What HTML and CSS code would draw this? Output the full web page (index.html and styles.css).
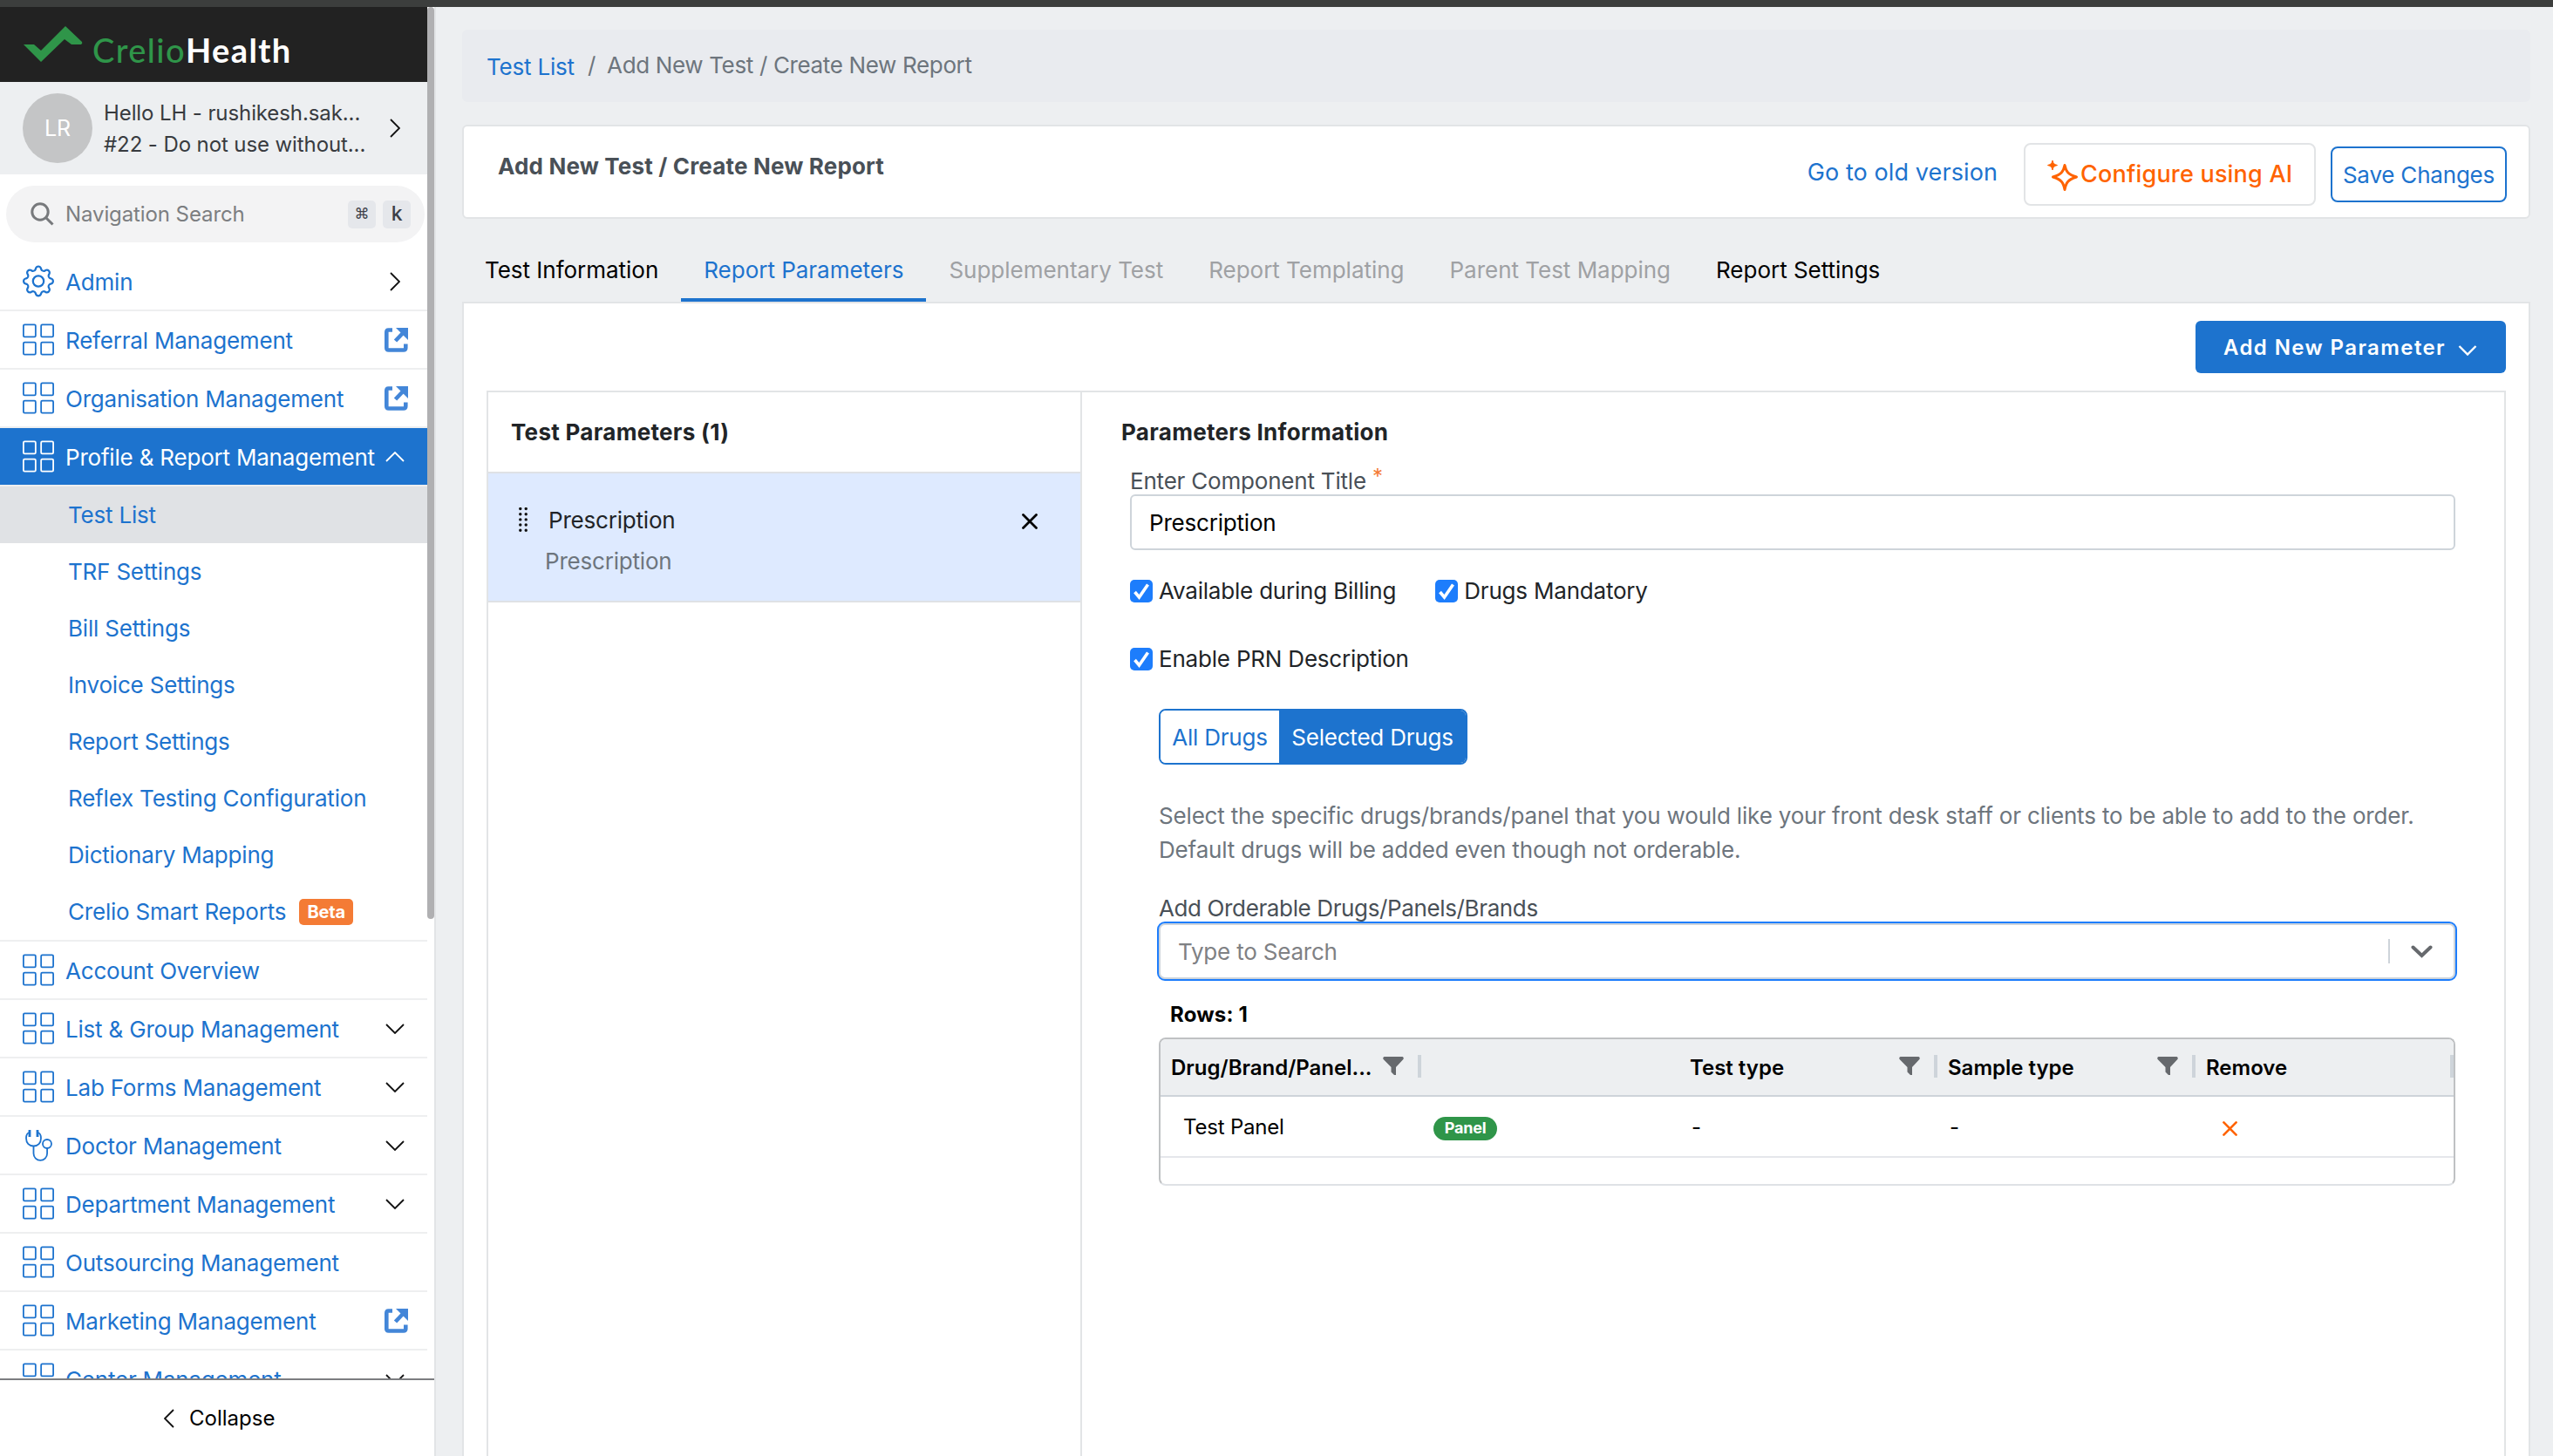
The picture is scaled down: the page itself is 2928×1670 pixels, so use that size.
FILE: index.html
```
<!DOCTYPE html>
<html lang="en">
  <head>
    <meta charset="utf-8" />
    <meta name="viewport" content="width=device-width, initial-scale=1" />
    <title>Add New Test / Create New Report</title>
    <link rel="stylesheet" href="styles.css">
  </head>
  <body>
    <!-- shared icons -->
    <svg class="sprite">
      <symbol id="grid" viewBox="0 0 16 16">
        <g fill="none" stroke="currentColor" stroke-width="0.8">
          <rect x="0.4" y="0.4" width="6.200" height="6.200" rx="0.600" />
          <rect x="9.400" y="0.4" width="6.200" height="6.200" rx="0.600" />
          <rect x="0.4" y="9.400" width="6.200" height="6.200" rx="0.600" />
          <rect x="9.400" y="9.400" width="6.200" height="6.200" rx="0.600" />
        </g>
      </symbol>
      <symbol id="gear" viewBox="0 0 16 16">
        <path fill="currentColor" d="M8 4.754a3.246 3.246 0 1 0 0 6.492 3.246 3.246 0 0 0 0-6.492zM5.754 8a2.246 2.246 0 1 1 4.492 0 2.246 2.246 0 0 1-4.492 0z" />
        <path fill="currentColor" d="M9.796 1.343c-.527-1.790-3.065-1.790-3.592 0l-.094.319a.873.873 0 0 1-1.255.520l-.292-.160c-1.640-.892-3.433.902-2.540 2.541l.159.292a.873.873 0 0 1-.520 1.255l-.319.094c-1.790.527-1.790 3.065 0 3.592l.319.094a.873.873 0 0 1 .520 1.255l-.160.292c-.892 1.640.901 3.434 2.541 2.540l.292-.159a.873.873 0 0 1 1.255.520l.094.319c.527 1.790 3.065 1.790 3.592 0l.094-.319a.873.873 0 0 1 1.255-.520l.292.160c1.640.893 3.434-.902 2.540-2.541l-.159-.292a.873.873 0 0 1 .520-1.255l.319-.094c1.790-.527 1.790-3.065 0-3.592l-.319-.094a.873.873 0 0 1-.520-1.255l.160-.292c.893-1.640-.902-3.433-2.541-2.540l-.292.159a.873.873 0 0 1-1.255-.520l-.094-.319zm-2.633.283c.246-.835 1.428-.835 1.674 0l.094.319a1.873 1.873 0 0 0 2.693 1.115l.291-.160c.764-.415 1.600.420 1.184 1.185l-.159.292a1.873 1.873 0 0 0 1.116 2.692l.318.094c.835.246.835 1.428 0 1.674l-.319.094a1.873 1.873 0 0 0-1.115 2.693l.160.291c.415.764-.420 1.600-1.185 1.184l-.291-.159a1.873 1.873 0 0 0-2.693 1.116l-.094.318c-.246.835-1.428.835-1.674 0l-.094-.319a1.873 1.873 0 0 0-2.692-1.115l-.292.160c-.764.415-1.600-.420-1.184-1.185l.159-.291A1.873 1.873 0 0 0 1.945 8.930l-.319-.094c-.835-.246-.835-1.428 0-1.674l.319-.094A1.873 1.873 0 0 0 3.060 4.377l-.160-.292c-.415-.764.420-1.600 1.185-1.184l.292.159a1.873 1.873 0 0 0 2.692-1.115l.094-.319z" />
      </symbol>
      <symbol id="steth" viewBox="0 0 36 37">
        <g fill="none" stroke="currentColor" stroke-width="1.800">
          <path d="M8 1v8M17 1v8" stroke-width="2.800" />
          <path d="M7.500 4Q4 5 4 10.500C4 16 7.500 19.500 12.500 19.500s8.500-3.500 8.500-9Q21 5 17.500 4" />
          <path d="M12.500 19.500v8.500a7.800 7.800 0 0 0 15.600 0v-6" />
          <circle cx="28" cy="17" r="5" />
        </g>
      </symbol>
      <symbol id="ext" viewBox="0 0 27 28">
        <g fill="none" stroke="currentColor" stroke-width="4.600">
          <path d="M9 2.500H4.500Q2.300 2.500 2.300 5v18q0 2.500 2.500 2.500h17q2.500 0 2.500-2.500v-4.500" />
          <path d="M12.500 15 22 5" />
        </g>
        <path fill="currentColor" d="M13 0h14v14z" />
      </symbol>
      <symbol id="right" viewBox="0 0 12 22"><path d="M1 1l10 10L1 21" fill="none" stroke="currentColor" stroke-width="1.800" /></symbol>
      <symbol id="left" viewBox="0 0 12 22"><path d="M11 1L1 11l10 10" fill="none" stroke="currentColor" stroke-width="1.800" /></symbol>
      <symbol id="down" viewBox="0 0 22 12"><path d="M1 1l10 10L21 1" fill="none" stroke="currentColor" stroke-width="1.800" /></symbol>
      <symbol id="up" viewBox="0 0 22 12"><path d="M1 11L11 1l10 10" fill="none" stroke="currentColor" stroke-width="1.800" /></symbol>
      <symbol id="cross" viewBox="0 0 18 18"><path d="M1.500 1.500l15 15M16.500 1.500l-15 15" fill="none" stroke="currentColor" stroke-width="2.800" stroke-linecap="round" /></symbol>
      <symbol id="funnel" viewBox="0 0 24 21"><path d="M1.500 0h21q2 1 .9 3L15 12v9h-2L9.500 17.500V12L.6 3Q-.5 1 1.500 0z" fill="currentColor" /></symbol>
    </svg>

    <div class="topbar"></div>
    <div class="app">
      <aside class="sidebar">
        <div class="side-scroll">
          <div class="side-main">
            <div class="logo">
              <svg class="logo-mark" viewBox="0 0 68 42"><path fill="#2f9549" d="M0 21h12l8 7L48 0l19 18q1 2-1 3H55L47 15 20 41z" /></svg>
              <span class="logo-text">Crelio<b>Health</b></span>
            </div>
            <div class="user">
              <div class="avatar">LR</div>
              <div class="user-text">
                <div>Hello LH - rushikesh.sak...</div>
                <div class="org">#22 - Do not use without...</div>
              </div>
              <svg class="chev-r"><use href="#right" /></svg>
            </div>
            <div class="search">
              <svg class="lens" viewBox="0 0 27 27"><circle cx="11" cy="11" r="9.200" /><path d="M17.500 17.500l8 8" /></svg>
              <span class="search-text">Navigation Search</span>
              <kbd class="cmd">⌘</kbd>
              <kbd>k</kbd>
            </div>
            <ul class="menu">
              <li><svg class="ico"><use href="#gear" /></svg><span>Admin</span><svg class="chev-r"><use href="#right" /></svg></li>
              <li><svg class="ico"><use href="#grid" /></svg><span>Referral Management</span><svg class="ext"><use href="#ext" /></svg></li>
              <li><svg class="ico"><use href="#grid" /></svg><span>Organisation Management</span><svg class="ext"><use href="#ext" /></svg></li>
              <li class="active"><svg class="ico"><use href="#grid" /></svg><span>Profile &amp; Report Management</span><svg class="chev-d"><use href="#up" /></svg></li>
            </ul>
            <ul class="submenu">
              <li class="current">Test List</li>
              <li>TRF Settings</li>
              <li>Bill Settings</li>
              <li>Invoice Settings</li>
              <li>Report Settings</li>
              <li>Reflex Testing Configuration</li>
              <li>Dictionary Mapping</li>
              <li>Crelio Smart Reports <span class="beta">Beta</span></li>
            </ul>
            <ul class="menu">
              <li><svg class="ico"><use href="#grid" /></svg><span>Account Overview</span></li>
              <li><svg class="ico"><use href="#grid" /></svg><span>List &amp; Group Management</span><svg class="chev-d"><use href="#down" /></svg></li>
              <li><svg class="ico"><use href="#grid" /></svg><span>Lab Forms Management</span><svg class="chev-d"><use href="#down" /></svg></li>
              <li><svg class="ico"><use href="#steth" /></svg><span>Doctor Management</span><svg class="chev-d"><use href="#down" /></svg></li>
              <li><svg class="ico"><use href="#grid" /></svg><span>Department Management</span><svg class="chev-d"><use href="#down" /></svg></li>
              <li><svg class="ico"><use href="#grid" /></svg><span>Outsourcing Management</span></li>
              <li><svg class="ico"><use href="#grid" /></svg><span>Marketing Management</span><svg class="ext"><use href="#ext" /></svg></li>
              <li><svg class="ico"><use href="#grid" /></svg><span>Center Management</span><svg class="chev-d"><use href="#down" /></svg></li>
            </ul>
          </div>
          <div class="track"><div class="thumb"></div></div>
        </div>
        <div class="collapse"><svg class="chev-r"><use href="#left" /></svg><span>Collapse</span></div>
      </aside>

      <main class="main">
        <nav class="crumbs">
          <a>Test List</a><span class="slash">/</span><span class="here">Add New Test / Create New Report</span>
        </nav>

        <header class="card">
          <h1>Add New Test / Create New Report</h1>
          <a class="old">Go to old version</a>
          <button class="btn-ai">
            <svg class="spark" viewBox="0 0 36 36">
              <path d="M20 5.500c1.500 7.500 4 10.500 13.500 13.500C24 22 21.500 25 20 33.500 18.500 25 16 22 6.500 19 16 16 18.500 13 20 5.500z" fill="none" stroke="currentColor" stroke-width="3" stroke-linejoin="round" />
              <path d="M6 0c.8 3.500 1.700 4.500 5.500 5.500C7.700 6.500 6.800 7.500 6 11 5.200 7.500 4.300 6.500.5 5.500 4.300 4.500 5.200 3.500 6 0z" fill="currentColor" stroke="currentColor" />
            </svg>
            <span>Configure using AI</span>
          </button>
          <button class="btn-save">Save Changes</button>
        </header>

        <div class="tabs">
          <div class="tab">Test Information</div>
          <div class="tab on">Report Parameters</div>
          <div class="tab off">Supplementary Test</div>
          <div class="tab off">Report Templating</div>
          <div class="tab off">Parent Test Mapping</div>
          <div class="tab">Report Settings</div>
        </div>

        <section class="panel">
          <button class="btn-add"><span>Add New Parameter</span><svg viewBox="0 0 22 12"><path d="M1.500 1l9.500 9.500L20.500 1" fill="none" stroke="currentColor" stroke-width="2.400" /></svg></button>
          <div class="split">
            <div class="list">
              <h2>Test Parameters (1)</h2>
              <div class="param">
                <svg class="drag" viewBox="0 0 10 26">
                  <path d="M2 1.500v24M8 1.500v24" stroke="#111" stroke-width="3.200" stroke-dasharray="0 5.700" stroke-linecap="round" />
                </svg>
                <div class="param-text">
                  <div>Prescription</div>
                  <div class="kind">Prescription</div>
                </div>
                <svg class="close"><use href="#cross" /></svg>
              </div>
            </div>

            <div class="info">
              <h2>Parameters Information</h2>
              <label class="lbl">Enter Component Title <sup>*</sup></label>
              <input class="field" type="text" value="Prescription" />
              <div class="checks">
                <label class="check"><svg viewBox="0 0 26 26"><path d="M5.500 14l5 6L20.500 5.500" /></svg>Available during Billing</label>
                <label class="check"><svg viewBox="0 0 26 26"><path d="M5.500 14l5 6L20.500 5.500" /></svg>Drugs Mandatory</label>
              </div>
              <div class="checks second">
                <label class="check"><svg viewBox="0 0 26 26"><path d="M5.500 14l5 6L20.500 5.500" /></svg>Enable PRN Description</label>
              </div>

              <div class="drugs">
                <div class="toggle">
                  <button>All Drugs</button><button class="sel">Selected Drugs</button>
                </div>
                <p class="hint">Select the specific drugs/brands/panel that you would like your front desk staff or clients to be able to add to the order.<br />Default drugs will be added even though not orderable.</p>
                <label class="lbl order">Add Orderable Drugs/Panels/Brands</label>
                <div class="select">
                  <span>Type to Search</span>
                  <i></i>
                  <svg viewBox="0 0 25 15"><path d="M2.500 2.500l10 9.500 10-9.500" fill="none" stroke="currentColor" stroke-width="4" stroke-linecap="round" /></svg>
                </div>
                <div class="rows">Rows: 1</div>
                <div class="table">
                  <div class="tr th">
                    <div><span>Drug/Brand/Panel...</span><svg><use href="#funnel" /></svg><i></i></div>
                    <div></div>
                    <div><span>Test type</span><svg><use href="#funnel" /></svg><i></i></div>
                    <div><span>Sample type</span><svg><use href="#funnel" /></svg><i></i></div>
                    <div><span>Remove</span><i></i></div>
                  </div>
                  <div class="tr td">
                    <div class="name">Test Panel</div>
                    <div><span class="pill">Panel</span></div>
                    <div class="dash">-</div>
                    <div class="dash">-</div>
                    <div class="rm"><svg><use href="#cross" /></svg></div>
                  </div>
                </div>
              </div>
            </div>
          </div>
        </section>
      </main>
    </div>
  </body>
</html>
```
FILE: styles.css
```
* {
  box-sizing: border-box;
}

body {
  margin: 0;
  height: 1670px;
  overflow: hidden;
  background: #edeff1;
  color: #212427;
  font-family: Inter, "Liberation Sans", sans-serif;
  font-size: 26px;
  letter-spacing: -0.2px;
}

ul {
  margin: 0;
  padding: 0;
  list-style: none;
}

h1,
h2,
p {
  margin: 0;
}

button {
  font: inherit;
  letter-spacing: inherit;
  padding: 0;
}

svg {
  display: block;
  flex: none;
}

.sprite {
  display: none;
}

.topbar {
  height: 8px;
  background: #3c3e3d;
}

.app {
  display: flex;
  height: 1662px;
}

/* sidebar */
.sidebar {
  width: 500px;
  flex: none;
  display: flex;
  flex-direction: column;
  background: #fff;
  border-right: 2px solid #e2e4e6;
}

.side-scroll {
  height: 1573px;
  display: flex;
  overflow: hidden;
}

.side-main {
  width: 490px;
}

.track {
  width: 8px;
}

.thumb {
  height: 1046px;
  border-radius: 4px;
  background: #b0b0b2;
}

.logo {
  height: 86px;
  display: flex;
  background: #222;
  padding-left: 27px;
}

.logo-mark {
  width: 68px;
  height: 42px;
  margin-top: 22px;
}

.logo-text {
  margin: 26px 0 0 11px;
  font-family: Lato, sans-serif;
  font-size: 38px;
  font-weight: 500;
  line-height: 46px;
  letter-spacing: 1.4px;
  color: #2f9549;
}

.logo-text b {
  color: #fff;
  font-weight: 700;
}

.user {
  height: 106px;
  display: flex;
  align-items: center;
  padding: 0 31px 0 26px;
  background: #edeff1;
}

.avatar {
  width: 80px;
  height: 80px;
  border-radius: 50%;
  background: #c4c5c6;
  color: #fff;
  font-size: 25px;
  line-height: 81px;
  text-align: center;
}

.user-text {
  flex: 1;
  margin-left: 13px;
  padding-top: 1px;
  font-size: 24px;
  line-height: 36px;
  letter-spacing: -0.1px;
  color: #383b3f;
  white-space: nowrap;
}

.chev-r {
  width: 12px;
  height: 22px;
  color: #111;
}

.chev-d {
  width: 22px;
  height: 12px;
  color: #111;
}

.search {
  height: 65px;
  margin: 13px 3px 12px 7px;
  padding: 0 16px 0 28px;
  display: flex;
  align-items: center;
  gap: 8px;
  border-radius: 33px;
  background: #f3f3f4;
}

.lens {
  width: 27px;
  height: 27px;
  fill: none;
  stroke: #77797c;
  stroke-width: 3;
}

.search-text {
  flex: 1;
  margin-left: 5px;
  font-size: 24px;
  letter-spacing: -0.1px;
  color: #7c7e81;
}

kbd {
  width: 32px;
  height: 32px;
  border-radius: 5px;
  background: #e5e7eb;
  color: #3c4048;
  font: 500 23px/31px Inter, sans-serif;
  text-align: center;
}

.cmd {
  font: 500 17px/30px "DejaVu Sans", sans-serif;
}

.menu li {
  height: 67px;
  display: flex;
  align-items: center;
  padding: 0 31px 0 26px;
  border-bottom: 2px solid #eeeff0;
  color: #1d73ce;
  white-space: nowrap;
}

.menu li span {
  flex: 1;
  margin-left: 13px;
  padding-top: 1px;
}

.ico {
  width: 36px;
  height: 37px;
}

.ext {
  width: 27px;
  height: 28px;
  margin-right: -9px;
  color: #4386d8;
}

.menu .chev-d {
  margin-right: -5px;
}

.menu .active {
  background: #1d73ce;
  color: #fff;
}

.active .chev-d {
  color: #fff;
}

.submenu {
  border-bottom: 2px solid #eeeff0;
  color: #1d73ce;
}

.submenu li {
  height: 65px;
  line-height: 65px;
  padding-left: 78px;
  display: flex;
  align-items: center;
}

.submenu .current {
  background: #e0e2e5;
}

.beta {
  margin-left: 15px;
  width: 62px;
  height: 30px;
  border-radius: 5px;
  background: #f47b35;
  color: #fff;
  font-size: 20px;
  font-weight: 700;
  line-height: 30px;
  text-align: center;
}

.collapse {
  height: 89px;
  border-top: 2px solid #7c7d80;
  display: flex;
  align-items: center;
  padding-left: 188px;
  color: #000;
}

.collapse span {
  margin-left: 17px;
  font-size: 24px;
  letter-spacing: 0;
}

/* content */
.main {
  flex: 1;
  display: flex;
  flex-direction: column;
  padding: 26px 26px 0 30px;
}

.crumbs {
  height: 83px;
  display: flex;
  padding: 22px 28px;
  line-height: 38px;
  border-radius: 6px;
  background: #e9ebef;
  color: #6d757d;
}

.crumbs a {
  color: #1d73ce;
  padding-top: 2px;
}

.slash {
  margin: 0 13px 0 15px;
}

.here {
  letter-spacing: -0.35px;
}

.card {
  height: 108px;
  margin-top: 26px;
  padding: 0 25px 0 39px;
  display: flex;
  align-items: center;
  background: #fff;
  border: 2px solid #e2e4e6;
  border-radius: 6px;
}

h1 {
  flex: 1;
  padding-bottom: 13px;
  color: #495057;
  font-size: 26px;
  font-weight: 700;
  letter-spacing: 0.17px;
}

.old {
  color: #1d73ce;
  font-size: 27px;
  letter-spacing: 0.1px;
}

.btn-ai {
  width: 335px;
  height: 72px;
  margin: 6px 17px 0 30px;
  padding-left: 25px;
  display: flex;
  align-items: center;
  border: 2px solid #e2e4e6;
  border-radius: 8px;
  background: #fff;
  color: #ff6300;
  font-size: 27px;
  font-weight: 500;
  letter-spacing: 0.2px;
  white-space: nowrap;
}

.spark {
  width: 36px;
  height: 36px;
  margin: 3px 2px 0 0;
}

.btn-ai span {
  padding-bottom: 1px;
}

.btn-save {
  width: 202px;
  height: 64px;
  margin-top: 6px;
  border: 2px solid #1d73ce;
  border-radius: 8px;
  background: #fff;
  color: #1d73ce;
  white-space: nowrap;
}

.tabs {
  height: 95px;
  display: flex;
  color: #000;
  letter-spacing: -0.02px;
}

.tab {
  height: 95px;
  padding: 35px 26px 0;
  line-height: 48px;
  white-space: nowrap;
}

.on {
  color: #1d73ce;
  border-bottom: 4px solid #1d73ce;
}

.off {
  color: #9fa1a4;
}

.panel {
  flex: 1;
  display: flex;
  flex-direction: column;
  align-items: flex-end;
  padding: 20px 26px 0 26px;
  background: #fff;
  border: 2px solid #e2e4e6;
  border-bottom: 0;
}

.btn-add {
  width: 356px;
  height: 60px;
  margin-bottom: 20px;
  padding: 0 33px 0 32px;
  display: flex;
  align-items: center;
  justify-content: space-between;
  border: 0;
  border-radius: 6px;
  background: #1d73ce;
  color: #fff;
  font-size: 24px;
  font-weight: 600;
  letter-spacing: 1.4px;
  white-space: nowrap;
}

.btn-add svg {
  width: 22px;
  height: 12px;
  margin-top: 8px;
}

.split {
  flex: 1;
  width: 100%;
  display: flex;
  border: 2px solid #e2e4e6;
  border-bottom: 0;
}

h2 {
  font-size: 26px;
  font-weight: 700;
  letter-spacing: 0.3px;
}

.list {
  width: 681px;
  border-right: 2px solid #e2e4e6;
}

.list h2 {
  padding-left: 26px;
  line-height: 91px;
}

.param {
  height: 150px;
  display: flex;
  padding: 38px 49px 0 34px;
  background: #deeaff;
  border: solid #dfe1e5;
  border-width: 2px 0;
}

.drag {
  width: 12px;
  height: 28px;
  margin-top: 1px;
}

.param-text {
  flex: 1;
  margin: -8px 0 0 23px;
  line-height: 47px;
}

.kind {
  margin-left: -4px;
  color: #6d757d;
}

.close {
  width: 18px;
  height: 18px;
  margin-top: 8px;
  color: #000;
}

.info {
  flex: 1;
  padding: 0 56px 0 45px;
}

.info h2 {
  line-height: 91px;
}

.lbl {
  display: block;
  margin-left: 10px;
  height: 26px;
  line-height: 22px;
  color: #495057;
  white-space: nowrap;
}

sup {
  color: #f47b35;
  font-size: 24px;
  line-height: 0;
  vertical-align: 6px;
}

.field {
  display: block;
  width: 1520px;
  height: 64px;
  margin-left: 10px;
  padding: 0 20px;
  border: 2px solid #ced4da;
  border-radius: 6px;
  background: #fff;
  color: #000;
  font: inherit;
  letter-spacing: inherit;
}

.checks {
  display: flex;
  gap: 45px;
  margin: 31px 0 0 10px;
}

.second {
  margin-top: 46px;
}

.check {
  display: flex;
  align-items: center;
  gap: 7px;
  height: 32px;
  line-height: 30px;
}

.check svg {
  width: 26px;
  height: 26px;
  border-radius: 5px;
  background: #1d7dfc;
  fill: none;
  stroke: #fff;
  stroke-width: 3.6;
}

.drugs {
  margin-left: 43px;
}

.toggle {
  display: flex;
  width: 354px;
  height: 64px;
  margin-top: 41px;
  overflow: hidden;
  border: 2px solid #1d73ce;
  border-radius: 8px;
}

.toggle button {
  width: 136px;
  border: 0;
  background: #fff;
  color: #1d73ce;
  white-space: nowrap;
}

.toggle .sel {
  width: 214px;
  background: #1d73ce;
  color: #fff;
}

.hint {
  margin-top: 39px;
  line-height: 39px;
  letter-spacing: -0.17px;
  color: #6d757d;
  white-space: nowrap;
}

.order {
  margin: 35px 0 0;
  line-height: 26px;
  letter-spacing: -0.37px;
}

.select {
  height: 68px;
  margin: 2px -2px 0;
  padding: 0 26px 0 22px;
  display: flex;
  align-items: center;
  width: 1491px;
  border: 2px solid #1d7dfc;
  border-radius: 9px;
  box-shadow: inset 0 0 0 2px #ced4da;
  color: #7f8184;
}

.select span {
  flex: 1;
}

.select i {
  width: 2px;
  height: 28px;
  margin-right: 24px;
  background: #ced4da;
}

.select svg {
  width: 25px;
  height: 15px;
  color: #66696d;
}

.rows {
  margin: 22px 0 0 13px;
  color: #000;
  font-size: 24px;
  font-weight: 700;
  letter-spacing: 0.2px;
  line-height: 34px;
}

.table {
  width: 1487px;
  height: 170px;
  margin-top: 9px;
  overflow: hidden;
  border: 2px solid #bfc1c3;
  border-bottom-color: #dfe2e6;
  border-radius: 8px;
  color: #000;
  font-size: 24px;
}

.tr {
  display: grid;
  grid-template-columns: 299px 296px 296px 296px 296px;
}

.tr div {
  display: flex;
  align-items: center;
  padding-left: 12px;
}

.th {
  height: 66px;
  background: #edeff1;
  border-bottom: 2px solid #ced4da;
  font-weight: 600;
  letter-spacing: 0;
}

.th span {
  flex: 1;
  white-space: nowrap;
}

.th svg {
  width: 24px;
  height: 21px;
  margin: -4px 16px 0 0;
  color: #66696d;
}

.th i {
  width: 4px;
  height: 26px;
  margin-top: -2px;
  background: #ced4da;
}

.td {
  height: 70px;
  border-bottom: 2px solid #e5e7eb;
}

.td .name {
  padding-left: 26px;
}

.td .dash {
  padding-left: 14px;
}

.pill {
  width: 73px;
  height: 27px;
  margin: 5px 0 0 2px;
  border-radius: 14px;
  background: #2f9549;
  color: #fff;
  font-size: 18px;
  font-weight: 700;
  line-height: 26px;
  text-align: center;
}

.td .rm {
  padding: 4px 0 0 31px;
}

.rm svg {
  width: 17px;
  height: 17px;
  color: #ff6300;
}
```
